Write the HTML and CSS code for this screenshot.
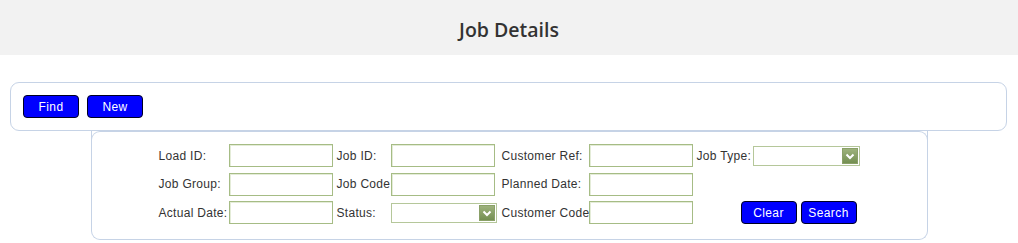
FILE: index.html
```html
<!DOCTYPE html>
<html>
	<head>
		<meta charset="utf-8">
		<title>Job Details</title>
		<link rel="stylesheet" href="styles.css">
	</head>
	<body>
		<header class="title">Job Details</header>
		<div class="action-bar">
			<button class="btn">Find</button>
			<button class="btn">New</button>
		</div>
		<div class="search-panel">
			<form class="search-grid">
				<label>Load ID:</label>
				<div class="cell"><input type="text"></div>
				<label>Job ID:</label>
				<div class="cell"><input type="text"></div>
				<label>Customer Ref:</label>
				<div class="cell"><input type="text"></div>
				<label>Job Type:</label>
				<div class="cell">
					<div class="select wide">
						<span class="arrow"><svg width="14" height="14" viewBox="0 0 14 14"><path d="M3.5 5.5 L7 9 L10.5 5.5" fill="none" stroke="#fff" stroke-width="2"/></svg></span>
					</div>
				</div>

				<label>Job Group:</label>
				<div class="cell"><input type="text"></div>
				<label>Job Code</label>
				<div class="cell"><input type="text"></div>
				<label>Planned Date:</label>
				<div class="cell"><input type="text"></div>
				<div class="empty"></div>

				<label>Actual Date:</label>
				<div class="cell"><input type="text"></div>
				<label>Status:</label>
				<div class="cell">
					<div class="select">
						<span class="arrow"><svg width="14" height="14" viewBox="0 0 14 14"><path d="M3.5 5.5 L7 9 L10.5 5.5" fill="none" stroke="#fff" stroke-width="2"/></svg></span>
					</div>
				</div>
				<label>Customer Code</label>
				<div class="cell"><input type="text"></div>
				<div class="buttons">
					<button type="button" class="btn">Clear</button>
					<button type="button" class="btn">Search</button>
				</div>
			</form>
		</div>
	</body>
</html>
```

FILE: styles.css
```css
* {
	margin: 0;
	padding: 0;
	box-sizing: border-box;
}
body {
	background: #fff;
	font-family: "Liberation Sans", Arial, sans-serif;
	font-size: 12px;
	color: #333;
}
.title {
	height: 55px;
	line-height: 59px;
	background: #f2f2f2;
	text-align: center;
	font-family: "Open Sans", sans-serif;
	font-weight: 600;
	font-size: 19.5px;
	color: #333;
}
.action-bar {
	margin: 27px 11px 0 10px;
	padding: 12px;
	height: 49px;
	border: 1px solid #c6d3e6;
	border-radius: 9px;
	display: flex;
	gap: 8px;
}
.btn {
	width: 56px;
	height: 23px;
	background: #0000ff;
	color: #fff;
	border: 1px solid #000022;
	border-radius: 4px;
	font-family: "Liberation Sans", Arial, sans-serif;
	font-size: 12px;
	letter-spacing: 0.4px;
	cursor: pointer;
}
.search-panel {
	width: 837px;
	margin: 0 auto;
	padding: 13px 0 15px;
	border: 1px solid #c6d3e6;
	border-top: none;
	border-radius: 0 0 9px 9px;
	position: relative;
}
.search-panel::before {
	content: "";
	position: absolute;
	left: -1px;
	right: -1px;
	top: 0;
	height: 10px;
	border: 1px solid #c6d3e6;
	border-bottom: none;
	border-radius: 9px 9px 0 0;
}
.search-grid {
	width: 701px;
	margin: 0 auto;
	display: grid;
	grid-template-columns: 70px 108px 54px 111px 87px 108px 56px 107px;
	grid-auto-rows: 23px;
	row-gap: 5.5px;
}
.search-grid label {
	display: flex;
	align-items: center;
	letter-spacing: 0.3px;
	white-space: nowrap;
}
.search-grid .empty {
	grid-column: span 2;
}
.cell {
	display: flex;
	align-items: center;
}
.cell input {
	width: 104px;
	height: 23px;
	border: 1px solid #a6bc85;
	box-shadow: inset 1px 1px 0 #e4ecd8;
	outline: none;
	background: #fff;
}
.select {
	position: relative;
	width: 106px;
	height: 20px;
	border: 1px solid #b5c79a;
	background: #fff;
}
.select.wide {
	width: 107px;
}
.arrow {
	position: absolute;
	right: 1px;
	top: 1px;
	width: 16px;
	height: 16px;
	background: linear-gradient(#9db27c, #748f52);
	border: 1px solid #8aa068;
	display: flex;
	align-items: center;
	justify-content: center;
}
.buttons {
	grid-column: 7 / span 2;
	display: flex;
	justify-content: flex-end;
	gap: 4px;
	padding-right: 3px;
}
```
